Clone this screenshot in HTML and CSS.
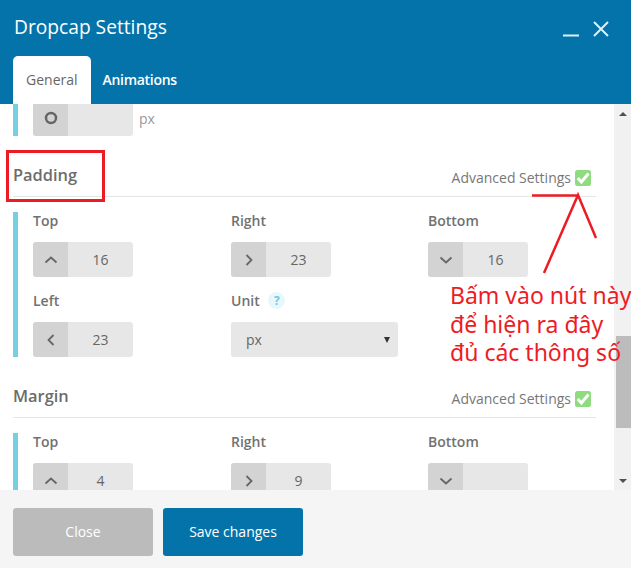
FILE: index.html
```html
<!DOCTYPE html>
<html lang="vi">
<head>
<meta charset="utf-8">
<title>Dropcap Settings</title>
<link rel="stylesheet" href="styles.css">
</head>
<body>
<div class="modal">
  <header class="modal-head">
    <div class="title-row">
      <h1 class="title">Dropcap Settings</h1>
      <div class="win-controls">
        <svg class="win-icon" width="16" height="16" viewBox="0 0 16 16"><path d="M0 14.500h16" /></svg>
        <svg class="win-icon" width="16" height="16" viewBox="0 0 16 16"><path d="M1 1l14 14M15 1L1 15" /></svg>
      </div>
    </div>
    <nav class="tabs">
      <span class="tab tab-active">General</span>
      <span class="tab tab-next">Animations</span>
    </nav>
  </header>

  <div class="modal-body">
    <main class="content">
      <div class="group group-cut">
        <div class="stepper stepper-cut">
          <span class="step-head"><svg class="chev" width="16" height="16" viewBox="0 0 16 16"><circle cx="8" cy="8" r="5" /></svg></span>
          <span class="step-val"></span>
        </div>
        <span class="unit">px</span>
      </div>

      <section class="section">
        <div class="section-head">
          <h2 class="section-title">Padding</h2>
          <div class="adv">Advanced Settings
            <svg class="check" width="16" height="16" viewBox="0 0 16 16"><rect width="16" height="16" rx="2.500" fill="#8edb80"/><path d="M2.800 8l3.600 4L13.500 3.500" fill="none" stroke="#fff" stroke-width="3"/></svg>
          </div>
        </div>
        <div class="group fields">
          <div class="field">
            <label class="field-label">Top</label>
            <div class="stepper"><span class="step-head"><svg class="chev" width="16" height="16" viewBox="0 0 16 16"><path d="M2.500 10.500L8 5.500l5.500 5"/></svg></span><span class="step-val">16</span></div>
          </div>
          <div class="field">
            <label class="field-label">Right</label>
            <div class="stepper"><span class="step-head"><svg class="chev" width="16" height="16" viewBox="0 0 16 16"><path d="M5.500 3l5 5-5 5"/></svg></span><span class="step-val">23</span></div>
          </div>
          <div class="field">
            <label class="field-label">Bottom</label>
            <div class="stepper"><span class="step-head"><svg class="chev" width="16" height="16" viewBox="0 0 16 16"><path d="M2.500 5.500L8 10.500l5.500-5"/></svg></span><span class="step-val">16</span></div>
          </div>
          <div class="field">
            <label class="field-label">Left</label>
            <div class="stepper"><span class="step-head"><svg class="chev" width="16" height="16" viewBox="0 0 16 16"><path d="M10.500 3l-5 5 5 5"/></svg></span><span class="step-val">23</span></div>
          </div>
          <div class="field">
            <label class="field-label">Unit <span class="help">?</span></label>
            <div class="select">px</div>
          </div>
        </div>
      </section>

      <section class="section">
        <div class="section-head">
          <h2 class="section-title">Margin</h2>
          <div class="adv">Advanced Settings
            <svg class="check" width="16" height="16" viewBox="0 0 16 16"><rect width="16" height="16" rx="2.500" fill="#8edb80"/><path d="M2.800 8l3.600 4L13.500 3.500" fill="none" stroke="#fff" stroke-width="3"/></svg>
          </div>
        </div>
        <div class="group fields">
          <div class="field">
            <label class="field-label">Top</label>
            <div class="stepper"><span class="step-head"><svg class="chev" width="16" height="16" viewBox="0 0 16 16"><path d="M2.500 10.500L8 5.500l5.500 5"/></svg></span><span class="step-val">4</span></div>
          </div>
          <div class="field">
            <label class="field-label">Right</label>
            <div class="stepper"><span class="step-head"><svg class="chev" width="16" height="16" viewBox="0 0 16 16"><path d="M5.500 3l5 5-5 5"/></svg></span><span class="step-val">9</span></div>
          </div>
          <div class="field">
            <label class="field-label">Bottom</label>
            <div class="stepper"><span class="step-head"><svg class="chev" width="16" height="16" viewBox="0 0 16 16"><path d="M2.500 5.500L8 10.500l5.500-5"/></svg></span><span class="step-val"></span></div>
          </div>
        </div>
      </section>
    </main>

    <aside class="scrollbar">
      <span class="sb-arrow sb-up"></span>
      <span class="sb-thumb"></span>
      <span class="sb-arrow sb-down"></span>
    </aside>
  </div>

  <footer class="modal-foot">
    <button class="btn btn-close">Close</button>
    <button class="btn btn-save">Save changes</button>
  </footer>
</div>

<div class="note-box"></div>
<svg class="note-arrow" width="631" height="568" viewBox="0 0 631 568">
  <path d="M532 195.500H578M544 273L578 195L596 238" />
</svg>
<p class="note-text">Bấm vào nút này<br>để hiện ra đây<br>đủ các thông số</p>
</body>
</html>
```

FILE: styles.css
```css
* { box-sizing: border-box; }
html, body { margin: 0; height: 100%; overflow: hidden; }
body { font-family: "Open Sans", sans-serif; color: #666; background: #fff; position: relative; }

.modal { width: 631px; height: 568px; display: flex; flex-direction: column; }

.modal-head { height: 104px; background: #0473aa; padding: 0 0 0 13px; display: flex; flex-direction: column; justify-content: space-between; }
.title-row { display: flex; justify-content: space-between; padding-top: 13px; padding-right: 22px; }
.title { margin: 0 0 0 1px; font-size: 19.200px; line-height: 27px; font-weight: 400; color: #fff; }
.win-controls { display: flex; gap: 14px; padding-top: 8px; }
.win-icon { fill: none; stroke: #dcf0f7; stroke-width: 2; }

.tabs { display: flex; }
.tab { height: 48px; padding: 0 13px; font-size: 14px; line-height: 48px; color: #fff; font-weight: 500; border-radius: 5px 5px 0 0; }
.tab-active { background: #fff; color: #666; font-weight: 400; }
.tab-next { padding-left: 12px; font-weight: 600; letter-spacing: -0.300px; }

.modal-body { height: 386px; display: flex; overflow: hidden; background: #fff; }
.content { flex: 1; padding: 0 18px 0 13px; overflow: hidden; }

.group { border-left: 5px solid #77d0e2; padding-left: 15px; }
.group-cut { height: 32px; display: flex; align-items: flex-start; gap: 6px; }
.stepper { width: 100px; height: 35px; display: flex; background: #e7e7e7; border-radius: 3px; overflow: hidden; }
.stepper-cut { height: 32px; border-radius: 0 0 3px 3px; }
.step-head { width: 35px; background: #d3d3d3; display: flex; align-items: center; justify-content: center; }
.stepper-cut .step-head { padding-bottom: 4px; }
.step-val { flex: 1; text-align: center; font-size: 14px; line-height: 35px; color: #666; }
.chev { fill: none; stroke: #666; stroke-width: 1.800; }
.stepper-cut .chev { stroke-width: 2.500; }
.unit { font-size: 14px; line-height: 30px; color: #999; }

.section-head { height: 61px; border-bottom: 1px solid #e6e6e6; display: flex; justify-content: space-between; align-items: flex-end; padding-bottom: 7px; padding-right: 5px; }
.section-title { margin: 0 0 2px; font-size: 16.400px; line-height: 24px; font-weight: 600; color: #6c6c6c; }
.adv { display: flex; align-items: center; gap: 4px; font-size: 14px; line-height: 22px; color: #777; }

.fields { margin-top: 15px; display: grid; grid-template-columns: 198px 197px 198px; row-gap: 15px; height: 145px; }
.field-label { display: block; height: 30px; font-size: 14px; line-height: 18px; font-weight: 600; color: #717171; }
.help { display: inline-block; width: 17px; height: 17px; margin-left: 5px; border-radius: 50%; background: #e8f7fb; color: #6fcbe2; font-size: 12px; line-height: 17px; font-weight: 700; text-align: center; vertical-align: 1px; }

.select { width: 167px; height: 35px; background: #e7e7e7; border-radius: 3px; padding-left: 15px; font-size: 14px; line-height: 35px; color: #666; position: relative; }
.select::after { content: ""; position: absolute; right: 8px; top: 15px; border-style: solid; border-width: 6px 3px 0; border-color: #333 transparent transparent; }

.scrollbar { width: 17px; background: #f1f1f1; position: relative; }
.sb-arrow { position: absolute; left: 5px; border-style: solid; border-color: transparent; }
.sb-up { top: 8px; border-width: 0 4px 4px; border-bottom-color: #505050; }
.sb-down { bottom: 7px; border-width: 4px 4px 0; border-top-color: #505050; }
.sb-thumb { position: absolute; top: 232px; left: 2px; width: 15px; height: 92px; background: #bcbcbc; }

.modal-foot { flex: 1; background: #f5f5f5; padding: 18px 0 0 13px; display: flex; gap: 10px; align-items: flex-start; }
.btn { width: 140px; height: 48px; border: 0; border-radius: 3px; padding: 0 0 2px; color: #fff; font-family: "Open Sans", sans-serif; font-size: 14px; }
.btn-close { background: #bbb; }
.btn-save { background: #0473aa; }

.note-box { position: absolute; left: 6px; top: 150px; width: 99px; height: 52px; border: 3px solid #ed1c24; }
.note-arrow { position: absolute; left: 0; top: 0; fill: none; stroke: #ed1c24; stroke-width: 2.500; pointer-events: none; }
.note-text { position: absolute; left: 450px; top: 281px; margin: 0; font-family: "Noto Sans", sans-serif; font-size: 23px; line-height: 28.500px; color: #ed1c24; white-space: nowrap; }
```
